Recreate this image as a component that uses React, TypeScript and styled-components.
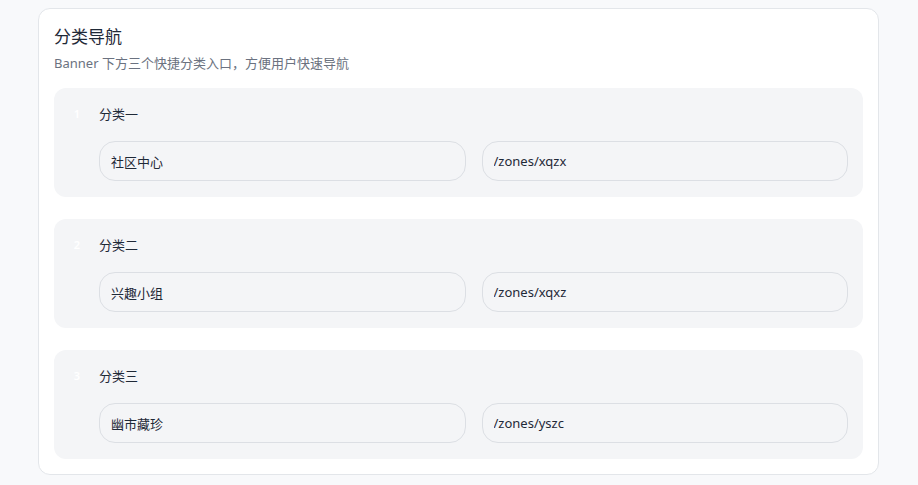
import React from "react";
import styled, { createGlobalStyle } from "styled-components";

const GlobalStyle = createGlobalStyle`
  * {
    box-sizing: border-box;
  }
  body {
    margin: 0;
    background-color: #f8f9fb;
    font-family: "Noto Sans", "Noto Sans CJK SC", sans-serif;
    color: #1f2937;
  }
`;

const Page = styled.div`
  padding: 8px 39px 10px 38px;
`;

const Card = styled.section`
  background-color: #fff;
  border: 1px solid #e3e6ea;
  border-radius: 12px;
  padding: 16px 15px 15px 15px;
`;

const Title = styled.h2`
  margin: 0;
  font-size: 17px;
  line-height: 24px;
  font-weight: 400;
  color: #1f2937;
`;

const Subtitle = styled.p`
  margin: 4px 0 15px;
  font-size: 13px;
  line-height: 20px;
  color: #6b7280;
`;

const List = styled.div`
  display: flex;
  flex-direction: column;
  gap: 22px;
`;

const Item = styled.div`
  background-color: #f4f5f7;
  border-radius: 12px;
  padding: 16px 15px 16px 12px;
  display: grid;
  grid-template-columns: 22px 1fr;
  column-gap: 11px;
  row-gap: 17px;
`;

const Index = styled.span`
  font-size: 11px;
  line-height: 20px;
  font-weight: 600;
  color: #fff;
  text-align: center;
`;

const Label = styled.span`
  font-size: 13px;
  line-height: 20px;
  color: #1f2937;
`;

const Fields = styled.div`
  grid-column: 2;
  display: grid;
  grid-template-columns: 1fr 1fr;
  gap: 16px;
`;

const Input = styled.input`
  height: 40px;
  width: 100%;
  border: 1px solid #dcdfe4;
  border-radius: 16px;
  background-color: #f4f5f7;
  padding: 0 11px;
  font-family: inherit;
  font-size: 13px;
  color: #1f2937;
  outline: none;
`;

const categories = [
  { name: "分类一", title: "社区中心", path: "/zones/xqzx" },
  { name: "分类二", title: "兴趣小组", path: "/zones/xqxz" },
  { name: "分类三", title: "幽市藏珍", path: "/zones/yszc" },
];

function App() {
  return (
    <Page>
      <GlobalStyle />
      <Card>
        <Title>分类导航</Title>
        <Subtitle>Banner 下方三个快捷分类入口，方便用户快速导航</Subtitle>
        <List>
          {categories.map((item, i) => (
            <Item key={item.path}>
              <Index>{i + 1}</Index>
              <Label>{item.name}</Label>
              <Fields>
                <Input defaultValue={item.title} />
                <Input defaultValue={item.path} />
              </Fields>
            </Item>
          ))}
        </List>
      </Card>
    </Page>
  );
}

export default App;
